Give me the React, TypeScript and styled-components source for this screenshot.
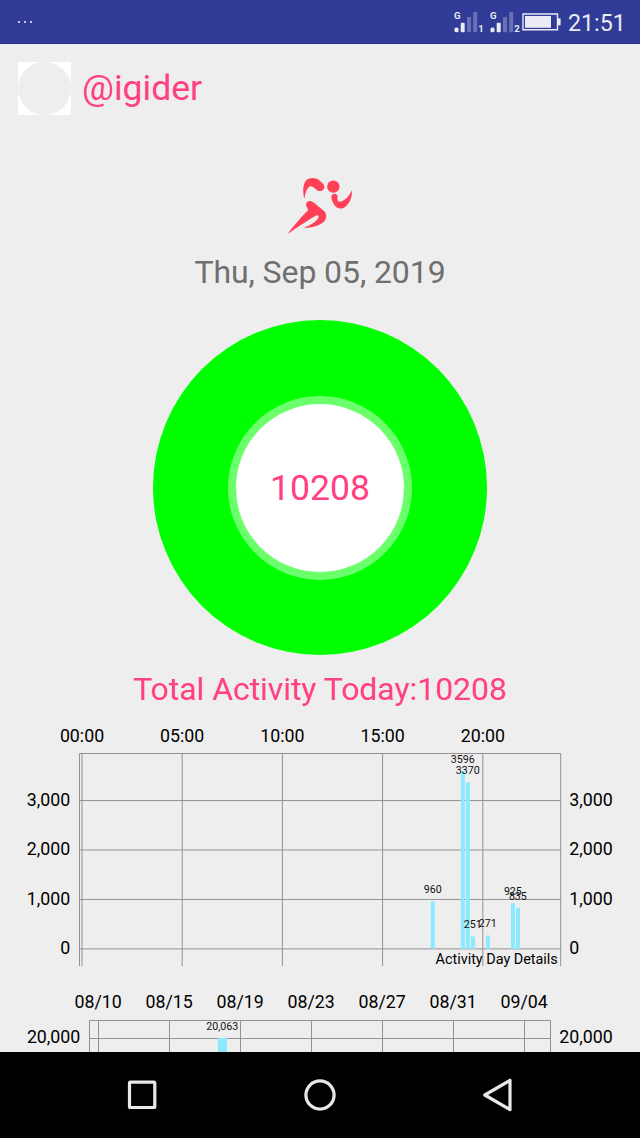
import React from "react";
import styled, { createGlobalStyle } from "styled-components";

const PINK = "#ff4081";
const BACKGROUND = "#eeeeee";
const BAR = "#8ceaff";
const FONT = 'Roboto, "Noto Sans", sans-serif';

const GlobalStyle = createGlobalStyle`
  html, body { margin: 0; padding: 0; background: ${BACKGROUND}; }
  * { box-sizing: border-box; }
  svg { display: block; }
`;

const Screen = styled.div`
  width: 640px;
  height: 1138px;
  display: flex;
  flex-direction: column;
  overflow: hidden;
  background: ${BACKGROUND};
  font-family: ${FONT};
`;

const StatusBar = styled.header`
  flex: none;
  height: 44px;
  display: flex;
  align-items: flex-start;
  background: #303c97;
  border-bottom: 1px solid #27338a;
  color: #eaebf4;
`;

const Notifications = styled.div`
  display: flex;
  gap: 4px;
  margin: 21px auto 0 18px;
`;

const Dot = styled.i`
  width: 2px;
  height: 2px;
  background: #c9cce3;
`;

const Clock = styled.time`
  width: 78px;
  padding: 9px 0 0 6px;
  font-size: 23.2px;
  line-height: 29px;
`;

const Content = styled.main`
  flex: none;
  height: 1008px;
  display: flex;
  flex-direction: column;
  align-items: center;
  overflow: hidden;
`;

const Profile = styled.section`
  width: 100%;
  height: 71px;
  display: flex;
  align-items: flex-end;
  gap: 11px;
  padding-left: 18px;
`;

const Avatar = styled.div`
  width: 53px;
  height: 53px;
  background: #fff;

  &::before {
    content: "";
    display: block;
    width: 53px;
    height: 53px;
    border-radius: 50%;
    background: ${BACKGROUND};
  }
`;

const UserName = styled.span`
  height: 53px;
  font-size: 35.56px;
  line-height: 52px;
  color: ${PINK};
`;

const RunnerSlot = styled.div`
  margin-top: 50px;
  height: 80px;
`;

const DateText = styled.div`
  height: 54px;
  margin-top: 1px;
  font-size: 32px;
  line-height: 52px;
  letter-spacing: -0.09px;
  color: #6f6f6f;
`;

const Ring = styled.div`
  flex: none;
  width: 334px;
  height: 335px;
  margin-top: 20px;
  border-radius: 50%;
  background: #00ff00;
  display: grid;
  place-items: center;
`;

const RingCenter = styled.div`
  width: 184px;
  height: 184px;
  border: 8.5px solid #6cff6c;
  border-radius: 50%;
  background: #fff;
  display: grid;
  place-items: center;
  font-size: 35.56px;
  line-height: 42px;
  color: ${PINK};
`;

const Total = styled.div`
  height: 60px;
  font-size: 32px;
  line-height: 68px;
  letter-spacing: -0.06px;
  color: ${PINK};
  white-space: nowrap;
`;

const NavBar = styled.nav`
  flex: none;
  height: 86px;
  display: flex;
  justify-content: center;
  align-items: center;
  gap: 138px;
  background: #000;
`;

const Chart = styled.svg`
  flex: none;
  font-family: ${FONT};
  fill: #000;
`;

const GridLine = styled.path`
  fill: none;
  stroke: #929292;
  stroke-width: 1;
`;

const AxisLabel = styled.text<{ $anchor?: string }>`
  font-size: 17.78px;
  text-anchor: ${(p) => p.$anchor ?? "middle"};
`;

const ValueLabel = styled.text`
  font-size: 10.67px;
  text-anchor: middle;
  fill: #111;
`;

const Caption = styled.text`
  font-size: 14.4px;
  text-anchor: end;
`;

const SimTag = styled.text`
  font-family: ${FONT};
  font-weight: 700;
  font-size: 9.6px;
  fill: #eaebf4;
`;

function Signal({ sim }: { sim: number }) {
  return (
    <svg width="36" height="43" viewBox="-4 0 36 43">
      <SimTag x="0" y="19">G</SimTag>
      <g fill="#eaebf4">
        <rect x="0.5" y="27.5" width="4" height="4.7" rx="1.5" />
        <rect x="6.7" y="22.8" width="4" height="9.4" rx="1" />
      </g>
      <g fill="#6871b3">
        <rect x="13" y="17" width="4" height="15.2" rx="1" />
        <rect x="19.2" y="12" width="4" height="20.2" rx="1" />
      </g>
      <SimTag x="24.3" y="32.3">{sim}</SimTag>
    </svg>
  );
}

function Battery() {
  return (
    <svg width="40" height="43" viewBox="0 0 40 43">
      <path d="M1 14H35.5V29.7H1z" fill="none" stroke="#eaebf4" strokeWidth="1.4" />
      <rect x="35.8" y="18.3" width="2.8" height="7" fill="#eaebf4" />
      <rect x="3" y="16" width="26" height="11.8" fill="#eaebf4" />
    </svg>
  );
}

function Runner() {
  return (
    <svg width="100" height="80" viewBox="0 0 300 240" fill="#ff4057">
      <circle cx="190" cy="65" r="18.5" />
      <path d="M103 101C97 78 99 56 109 46C117 37 137 37 148 46L160 57C167 67 161 77 152 78C145 78 140 75 136 71C130 65 124 62 119 64C111 70 106 82 103 101Z" />
      <path d="M184 97C183 83 201 83 203 94C202 102 201 108 208 110C222 110 236 97 245 76C248 97 238 117 225 126C215 134 201 132 193 120C188 112 185 105 184 97Z" />
      <path d="M109 124C106 115 112 107 121 108C127 109 132 113 139 119L162 138C170 146 171 158 164 167C151 182 125 189 101 188C119 182 134 174 143 162C149 155 145 151 140 151C127 157 106 173 88 183L53 207L62 194L95 155L115 135Z" />
    </svg>
  );
}

const DAY_BARS = [
  { slot: 70, value: 960 },
  { slot: 76, value: 3596 },
  { slot: 77, value: 3370 },
  { slot: 78, value: 251 },
  { slot: 81, value: 271 },
  { slot: 86, value: 925 },
  { slot: 87, value: 835 },
];

const HOURS = ["00:00", "05:00", "10:00", "15:00", "20:00"];
const STEPS = ["0", "1,000", "2,000", "3,000"];

function DayChart() {
  const slotX = (slot: number) => 82 + slot * 5.01;
  const valueY = (value: number) => 233.9 - value * 0.04945;
  return (
    <Chart width="640" height="260" viewBox="0 0 640 260">
      <GridLine d="M79.5 251V38.5H560.7V251" />
      {HOURS.map((hour, i) => (
        <React.Fragment key={hour}>
          <GridLine d={`M${82 + i * 100.2} 38.5V251`} />
          <AxisLabel x={82 + i * 100.2} y="26.7">{hour}</AxisLabel>
        </React.Fragment>
      ))}
      {STEPS.map((step, i) => (
        <React.Fragment key={step}>
          <GridLine d={`M79.5 ${valueY(i * 1000)}H560.7`} />
          <AxisLabel $anchor="end" x="70.3" y={valueY(i * 1000) + 5.1}>{step}</AxisLabel>
          <AxisLabel $anchor="start" x="569.3" y={valueY(i * 1000) + 5.1}>{step}</AxisLabel>
        </React.Fragment>
      ))}
      {DAY_BARS.map(({ slot, value }) => (
        <rect
          key={slot}
          x={slotX(slot) - 1.9}
          y={valueY(value)}
          width="4"
          height={valueY(0) - valueY(value)}
          fill={BAR}
        />
      ))}
      {DAY_BARS.map(({ slot, value }) => (
        <ValueLabel key={slot} x={slotX(slot)} y={valueY(value) - 8}>{value}</ValueLabel>
      ))}
      <Caption x="557.8" y="248.6">Activity Day Details</Caption>
    </Chart>
  );
}

const DATES = ["08/10", "08/15", "08/19", "08/23", "08/27", "08/31", "09/04"];

function MonthChart() {
  return (
    <Chart width="640" height="77" viewBox="0 0 640 77">
      <GridLine d="M89.5 77V45.5H550.5V77M89.5 63.5H550.5" />
      {DATES.map((date, i) => (
        <React.Fragment key={date}>
          <GridLine d={`M${Math.floor(98.4 + i * 71) + 0.5} 45.5V77`} />
          <AxisLabel x={98.2 + i * 71} y="33.4">{date}</AxisLabel>
        </React.Fragment>
      ))}
      <rect x="218" y="62.8" width="9" height="14.2" fill={BAR} />
      <ValueLabel x="222.3" y="55">20,063</ValueLabel>
      <AxisLabel $anchor="end" x="80.3" y="68.4">20,000</AxisLabel>
      <AxisLabel $anchor="start" x="559.3" y="68.4">20,000</AxisLabel>
    </Chart>
  );
}

const NAV_ICONS = [
  <rect x="7.5" y="7.2" width="25.3" height="25.3" rx="1" />,
  <circle cx="20" cy="20" r="14.1" />,
  <path d="M6.8 20L32 5.3V34.7Z" strokeLinejoin="round" />,
];

export default function App() {
  return (
    <Screen>
      <GlobalStyle />
      <StatusBar>
        <Notifications>
          <Dot />
          <Dot />
          <Dot />
        </Notifications>
        <Signal sim={1} />
        <Signal sim={2} />
        <Battery />
        <Clock>21:51</Clock>
      </StatusBar>
      <Content>
        <Profile>
          <Avatar />
          <UserName>@igider</UserName>
        </Profile>
        <RunnerSlot>
          <Runner />
        </RunnerSlot>
        <DateText>Thu, Sep 05, 2019</DateText>
        <Ring>
          <RingCenter>10208</RingCenter>
        </Ring>
        <Total>Total Activity Today:10208</Total>
        <DayChart />
        <MonthChart />
      </Content>
      <NavBar>
        {NAV_ICONS.map((icon, i) => (
          <svg key={i} width="40" height="40" viewBox="0 0 40 40" fill="none" stroke="#e8e8e8" strokeWidth="3.2">
            {icon}
          </svg>
        ))}
      </NavBar>
    </Screen>
  );
}
